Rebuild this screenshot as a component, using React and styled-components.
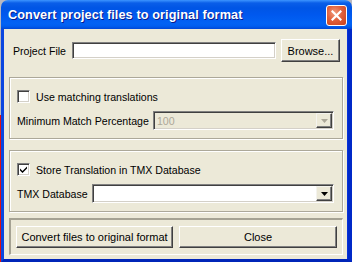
import React from 'react';
import styled, { createGlobalStyle } from 'styled-components';

const GlobalStyle = createGlobalStyle`
  html, body {
    margin: 0;
    padding: 0;
  }
  body {
    width: 352px;
    height: 262px;
    overflow: hidden;
    background: linear-gradient(to bottom, #b8b8c0 0, #b8b8c0 115px, #e01010 115px, #e01010 100%);
    font-family: "Liberation Sans", Arial, sans-serif;
    font-size: 10.6px;
    color: #000;
  }
`;

const Window = styled.div`
  margin-left: 1px;
  width: 351px;
  height: 262px;
  display: flex;
  flex-direction: column;
`;

const TitleBar = styled.div`
  height: 29px;
  flex: none;
  display: flex;
  align-items: center;
  justify-content: space-between;
  padding: 0 5px 0 7px;
  box-sizing: border-box;
  border-radius: 7px 7px 0 0;
  background: linear-gradient(
    to bottom,
    #3d95ff 0,
    #0a5ee8 3px,
    #0055e5 8px,
    #0058ee 50%,
    #0262f4 80%,
    #005ef0 90%,
    #0047d6 100%
  );
`;

const Title = styled.span`
  font-family: "Liberation Sans", Arial, sans-serif;
  font-weight: bold;
  font-size: 12.7px;
  color: #fff;
  text-shadow: 1px 1px 0 #0a1b8c;
  letter-spacing: 0.1px;
`;

const CloseButton = styled.div`
  width: 21px;
  height: 21px;
  box-sizing: border-box;
  margin-top: 1px;
  border: 1px solid #fff;
  border-radius: 3px;
  background: radial-gradient(circle at 40% 35%, #f19b7d 0, #e0603c 45%, #c8401c 100%);
  display: flex;
  align-items: center;
  justify-content: center;
`;

const Frame = styled.div`
  flex: 1;
  display: flex;
  flex-direction: column;
  background: #ece9d8;
  border-left: 3px solid #0a46e0;
  border-right: 4px solid #0029c8;
  border-bottom: 3px solid #0025b8;
  box-shadow: inset -1px 0 0 #0831d9;
  padding: 10px 4px 0 5px;
`;

const FileRow = styled.div`
  display: flex;
  align-items: center;
  height: 23px;
  padding: 0 4px 0 4px;
`;

const Label = styled.span`
  white-space: nowrap;
  margin-right: ${(p) => p.$gap || 5}px;
`;

const TextInput = styled.div`
  box-sizing: border-box;
  height: ${(p) => p.$h || 17}px;
  flex: 1;
  background: ${(p) => (p.$disabled ? '#ece9d8' : '#fff')};
  border-top: 1px solid #808080;
  border-left: 1px solid #808080;
  border-right: 1px solid #fff;
  border-bottom: 1px solid #fff;
  box-shadow: inset 1px 1px 0 #404040, inset -1px -1px 0 #d4d0c8;
  display: flex;
  align-items: center;
  padding: 0 2px 0 3px;
  color: #aca899;
`;

const Button = styled.div`
  box-sizing: border-box;
  width: ${(p) => p.$w}px;
  height: ${(p) => p.$h || 23}px;
  flex: none;
  margin-left: ${(p) => p.$ml || 0}px;
  background: #ece9d8;
  border-top: 1px solid #fff;
  border-left: 1px solid #fff;
  border-right: 1px solid #404040;
  border-bottom: 1px solid #404040;
  box-shadow: inset -1px -1px 0 #808080;
  display: flex;
  align-items: center;
  justify-content: center;
  font-size: 11px;
  white-space: nowrap;
`;

const GroupBox = styled.div`
  box-sizing: border-box;
  height: ${(p) => p.$h}px;
  margin-top: ${(p) => p.$mt}px;
  margin-right: 1px;
  border: 1px solid #aca899;
  box-shadow: inset 1px 1px 0 #fff, 1px 1px 0 #fff;
  display: flex;
  flex-direction: column;
  gap: 8px;
  padding: 12px 8px 0 7px;
`;

const ButtonPanel = styled.div`
  box-sizing: border-box;
  height: 37px;
  margin-top: 6px;
  margin-right: 1px;
  border-top: 2px solid #a5a293;
  border-left: 2px solid #a5a293;
  border-right: 1px solid #fff;
  border-bottom: 1px solid #fff;
  display: flex;
  align-items: center;
  padding: 0 4px 0 5px;
`;

const CheckRow = styled.label`
  display: flex;
  align-items: center;
  height: 13px;
  gap: 6px;
`;

const CheckBox = styled.span`
  box-sizing: border-box;
  width: 13px;
  height: 13px;
  flex: none;
  background: #fff;
  border-top: 1px solid #808080;
  border-left: 1px solid #808080;
  border-right: 1px solid #fff;
  border-bottom: 1px solid #fff;
  box-shadow: inset 1px 1px 0 #404040, inset -1px -1px 0 #d4d0c8;
  display: flex;
  align-items: center;
  justify-content: center;
`;

const ComboRow = styled.div`
  display: flex;
  align-items: center;
  height: 19px;
`;

const Combo = styled(TextInput)`
  padding: 0 1px 0 3px;
  justify-content: space-between;
`;

const DropButton = styled.div`
  box-sizing: border-box;
  width: 16px;
  height: 15px;
  background: #ece9d8;
  border-top: 1px solid #f4f3ee;
  border-left: 1px solid #f4f3ee;
  border-right: 1px solid #404040;
  border-bottom: 1px solid #404040;
  box-shadow: inset -1px -1px 0 #808080;
  display: flex;
  align-items: center;
  justify-content: center;
`;

const Arrow = ({ color }) => (
  <svg width="7" height="4" viewBox="0 0 7 4">
    <path d="M0 0h7L3.5 4z" fill={color} />
  </svg>
);

const Check = () => (
  <svg width="9" height="9" viewBox="0 0 9 9">
    <path d="M1 3.5l2.5 2.5L8 1.5v2L3.5 8 1 5.5z" fill="#000" />
  </svg>
);

export default function App() {
  return (
    <>
      <GlobalStyle />
      <Window>
        <TitleBar>
          <Title>Convert project files to original format</Title>
          <CloseButton>
            <svg width="11" height="11" viewBox="0 0 11 11">
              <path d="M1.5 1.5l8 8M9.5 1.5l-8 8" stroke="#fff" strokeWidth="2.2" strokeLinecap="square" />
            </svg>
          </CloseButton>
        </TitleBar>
        <Frame>
          <FileRow>
            <Label $gap={6}>Project File</Label>
            <TextInput />
            <Button $w={59} $ml={5}>Browse...</Button>
          </FileRow>

          <GroupBox $h={62} $mt={15}>
            <CheckRow>
              <CheckBox />
              <span>Use matching translations</span>
            </CheckRow>
            <ComboRow>
              <Label $gap={4}>Minimum Match Percentage</Label>
              <Combo $h={19} $disabled>
                <span>100</span>
                <DropButton>
                  <Arrow color="#aca899" />
                </DropButton>
              </Combo>
            </ComboRow>
          </GroupBox>

          <GroupBox $h={62} $mt={11}>
            <CheckRow>
              <CheckBox>
                <Check />
              </CheckBox>
              <span>Store Translation in TMX Database</span>
            </CheckRow>
            <ComboRow>
              <Label $gap={4}>TMX Database</Label>
              <Combo $h={19}>
                <span />
                <DropButton>
                  <Arrow color="#000" />
                </DropButton>
              </Combo>
            </ComboRow>
          </GroupBox>

          <ButtonPanel>
            <Button $w={157} $h={22}>Convert files to original format</Button>
            <Button $w={158} $h={22} $ml={6}>Close</Button>
          </ButtonPanel>
        </Frame>
      </Window>
    </>
  );
}
